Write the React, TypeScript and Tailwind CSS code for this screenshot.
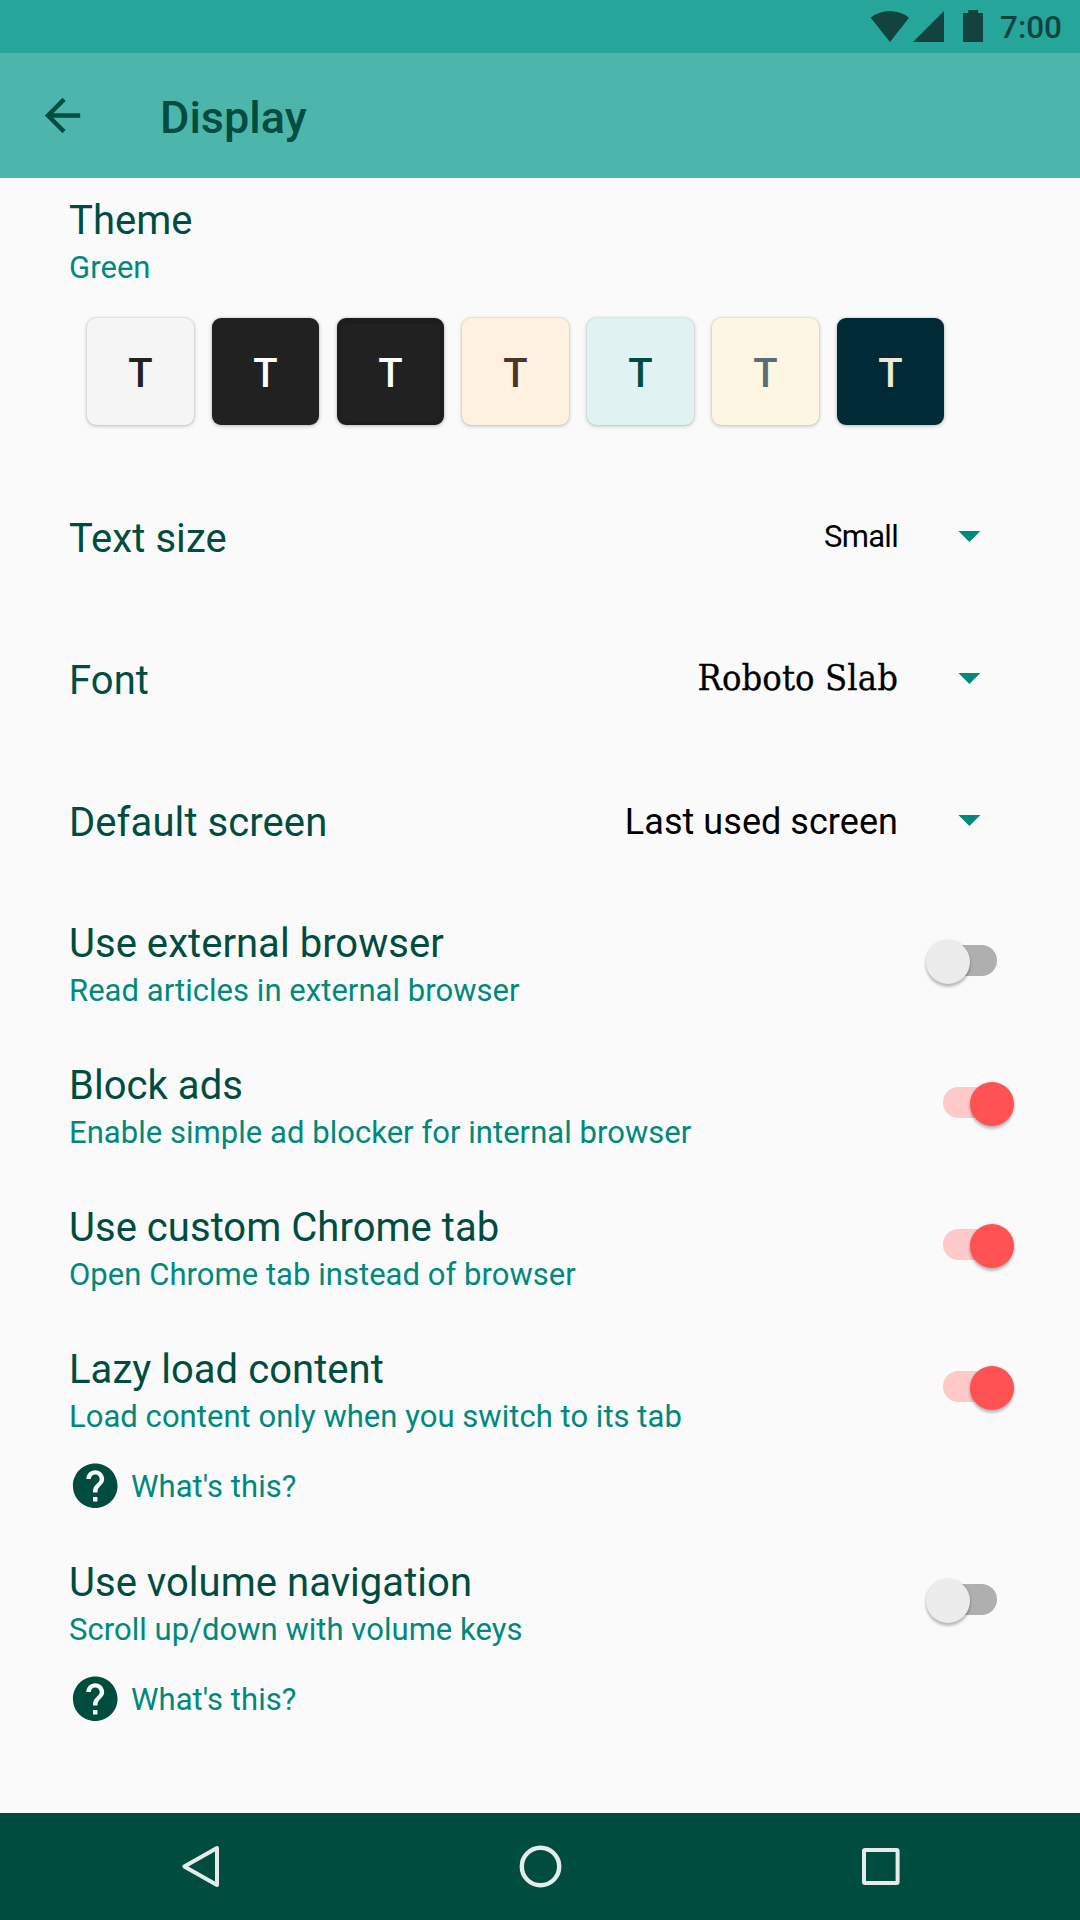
import React from 'react';

const themes = [
  { tile: 'bg-[#f5f5f5]', text: 'text-[#212121]' },
  { tile: 'bg-[#212121]', text: 'text-white' },
  { tile: 'bg-[#212121] border-x-4 border-t-[6px] border-b-4 border-[#1d1d1d]', text: 'text-white' },
  { tile: 'bg-[#fff1e0]', text: 'text-[#4e342e]' },
  { tile: 'bg-[#e0f2f1]', text: 'text-[#004d40]' },
  { tile: 'bg-[#fdf6e3]', text: 'text-[#586e75]' },
  { tile: 'bg-[#002b36]', text: 'text-[#eee8d5]' },
];

function StatusBar() {
  return (
    <header className="flex h-[53px] items-start bg-[#26a69a] pl-[870px] text-[#12433f]">
      <svg className="mt-[11px] h-[31px] w-[39px] shrink-0" viewBox="0 0 39 31" fill="currentColor">
        <path d="M0.7 6.7A31 31 0 0 1 39 6.7L20 31Z" />
      </svg>
      <svg className="mt-[11px] ml-1 h-[31px] w-[31px] shrink-0" viewBox="0 0 31 31" fill="currentColor">
        <path d="M31 0V31H0Z" />
      </svg>
      <svg className="mt-[10px] ml-[19px] h-8 w-5 shrink-0" viewBox="0 0 20 32" fill="currentColor">
        <path d="M5.3 0H15V3H20V32H0V3H5.3Z" />
      </svg>
      <span className="mt-[10px] ml-[17px] text-[31.5px] leading-9 font-medium">7:00</span>
    </header>
  );
}

function AppBar() {
  return (
    <div className="flex h-[125px] bg-[#4db6ac] pl-[36px]">
      <svg className="mt-[36px] h-[53px] w-[53px]" viewBox="0 0 24 24" fill="currentColor">
        <path d="M20 11H7.83l5.59-5.59L12 4l-8 8 8 8 1.41-1.41L7.83 13H20v-2z" />
      </svg>
      <h1 className="mt-[38px] ml-[71px] text-[45px] leading-[54px] font-medium">Display</h1>
    </div>
  );
}

function Heading({ title, summary }: { title: string; summary: string }) {
  return (
    <>
      <h2 className="text-[40px] leading-[48px] tracking-[0.04px]">{title}</h2>
      <p className="mt-[5px] text-[31px] leading-9 tracking-[0.04px] text-[#00897b]">{summary}</p>
    </>
  );
}

function Spinner({ title, value, valueClass }: { title: string; value: string; valueClass: string }) {
  return (
    <div className="flex h-[142px] items-start pr-[99px] pl-[69px]">
      <h2 className="mt-[49px] text-[40px] leading-[48px] tracking-[0.08px]">{title}</h2>
      <span className={`ml-auto text-black ${valueClass}`}>{value}</span>
      <svg className="mt-[65px] ml-[61px] h-[11px] w-[22px] overflow-visible" viewBox="0 0 22 11" fill="#00897b">
        <path d="M-0.6 0H21.4L10.4 11Z" />
      </svg>
    </div>
  );
}

function Toggle({ on }: { on: boolean }) {
  return (
    <div
      role="switch"
      aria-checked={on}
      className={`relative mt-[53px] h-[31px] w-[54px] rounded-full ${on ? 'bg-[#fdc9c9]' : 'bg-[#afafaf]'}`}
    >
      <div
        className={`absolute top-[-5.5px] size-[44.5px] rounded-full shadow-[0_3px_3px_rgba(0,0,0,0.24),0_0_3px_rgba(0,0,0,0.12)] ${
          on ? 'left-[26.7px] bg-[#ff5252]' : '-left-[17.4px] bg-[#ececec]'
        }`}
      />
    </div>
  );
}

function SwitchRow({ title, summary, on, help }: { title: string; summary: string; on: boolean; help?: boolean }) {
  return (
    <div className={`flex items-start justify-between pr-[83px] pl-[69px] ${help ? 'h-[213px]' : 'h-[142px]'}`}>
      <div className="pt-7">
        <Heading title={title} summary={summary} />
        {help && (
          <div className="mt-[23.5px] flex h-[54px] items-center gap-[9px]">
            <svg className="-ml-px size-[54px]" viewBox="-0.2 0 24.2 24.2" fill="currentColor">
              <path d="M12 2C6.48 2 2 6.48 2 12s4.48 10 10 10 10-4.48 10-10S17.52 2 12 2zm1 17h-2v-2h2v2zm2.07-7.75l-.9.92C13.45 12.9 13 13.5 13 15h-2v-.5c0-1.1.45-2.1 1.17-2.83l1.24-1.26c.37-.36.59-.86.59-1.41 0-1.1-.9-2-2-2s-2 .9-2 2H8c0-2.21 1.79-4 4-4s4 1.79 4 4c0 .88-.36 1.68-.93 2.25z" />
            </svg>
            <span className="pt-[3px] text-[31px] leading-9 tracking-[0.05px] text-[#00897b]">What's this?</span>
          </div>
        )}
      </div>
      <Toggle on={on} />
    </div>
  );
}

function NavBar() {
  return (
    <nav className="flex h-[107px] items-center justify-between bg-[#004d40] px-[176px]">
      <svg className="size-[50px]" viewBox="0 0.5 50 50" fill="none" stroke="#e5eceb" strokeWidth="4" strokeLinejoin="round">
        <path d="M41 6.5V43.5L8.3 25Z" />
      </svg>
      <svg className="size-[50px]" viewBox="0 0.5 50 50" fill="none" stroke="#e5eceb" strokeWidth="4.4">
        <circle cx="25.5" cy="25" r="18.7" />
      </svg>
      <svg className="size-[50px]" viewBox="0 0.5 50 50" fill="none" stroke="#e5eceb" strokeWidth="4">
        <rect x="10" y="8.4" width="33.6" height="33.2" rx="1" />
      </svg>
    </nav>
  );
}

export default function App() {
  return (
    <div className="flex h-[1920px] w-[1080px] flex-col overflow-hidden bg-[#fafafa] font-['Roboto',sans-serif] text-[#004d40]">
      <StatusBar />
      <AppBar />
      <main className="flex-1">
        <section className="h-72 pt-[19px] pl-[69px]">
          <Heading title="Theme" summary="Green" />
          <div className="mt-8 ml-[18px] flex gap-[18px]">
            {themes.map((t, i) => (
              <div
                key={i}
                className={`flex size-[107px] items-center justify-center rounded-[9px] shadow-[0_1px_4px_rgba(0,0,0,0.24),0_0_2px_rgba(0,0,0,0.14)] ${t.tile} ${t.text}`}
              >
                <span className={`text-[40px] leading-[48px] font-medium ${i === 2 ? 'pt-[3px]' : 'pt-[5px]'}`}>T</span>
              </div>
            ))}
          </div>
        </section>
        <Spinner title="Text size" value="Small" valueClass="mt-[53px] text-[31px] leading-9 tracking-[-0.7px]" />
        <Spinner
          title="Font"
          value="Roboto Slab"
          valueClass="mt-[46px] font-['Roboto_Slab','DejaVu_Serif_Condensed',serif] text-[36px] leading-[48px] tracking-[0.1px] [-webkit-text-stroke:0.3px]"
        />
        <Spinner title="Default screen" value="Last used screen" valueClass="mt-12 text-[36px] leading-[48px] tracking-[0.05px]" />
        <SwitchRow title="Use external browser" summary="Read articles in external browser" on={false} />
        <SwitchRow title="Block ads" summary="Enable simple ad blocker for internal browser" on />
        <SwitchRow title="Use custom Chrome tab" summary="Open Chrome tab instead of browser" on />
        <SwitchRow title="Lazy load content" summary="Load content only when you switch to its tab" on help />
        <SwitchRow title="Use volume navigation" summary="Scroll up/down with volume keys" on={false} help />
      </main>
      <NavBar />
    </div>
  );
}
